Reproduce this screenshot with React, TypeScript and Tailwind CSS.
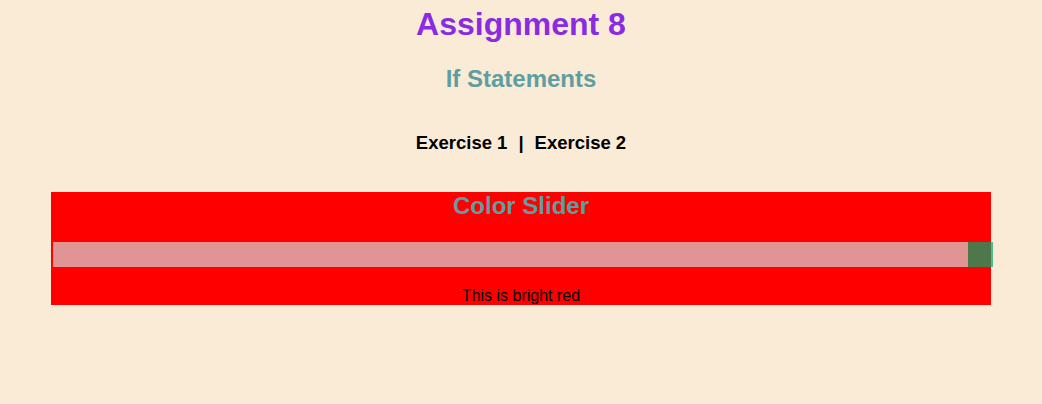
import React from "react";

export default function App() {
  return (
    <div className="min-h-[404px] w-full bg-[#faebd7] font-['Liberation_Sans',Arial,sans-serif] text-black">
      <h1 className="pt-[6px] text-center text-[32px] font-bold leading-[37px] text-[#8a2be2]">
        Assignment 8
      </h1>
      <h2 className="mt-[22px] text-center text-[24px] font-bold leading-[28px] text-[#5f9ea0]">
        If Statements
      </h2>
      <div className="mt-[39px] flex justify-center gap-[11px] text-[18.5px] font-bold leading-[21px]">
        <span>Exercise 1</span>
        <span>|</span>
        <span>Exercise 2</span>
      </div>
      <div className="mx-auto mt-[39px] w-[940px] bg-[#ff0000]">
        <h2 className="text-center text-[24px] font-bold leading-[28px] text-[#5f9ea0]">
          Color Slider
        </h2>
        <div className="mt-[22px] ml-[2px] flex h-[25px] w-[940px] justify-end bg-[#d3d3d3] opacity-70">
          <div className="h-[25px] w-[25px] bg-[#04aa6d]" />
        </div>
        <p className="mt-[19px] text-center text-[16px] leading-[19px]">This is bright red</p>
      </div>
    </div>
  );
}
